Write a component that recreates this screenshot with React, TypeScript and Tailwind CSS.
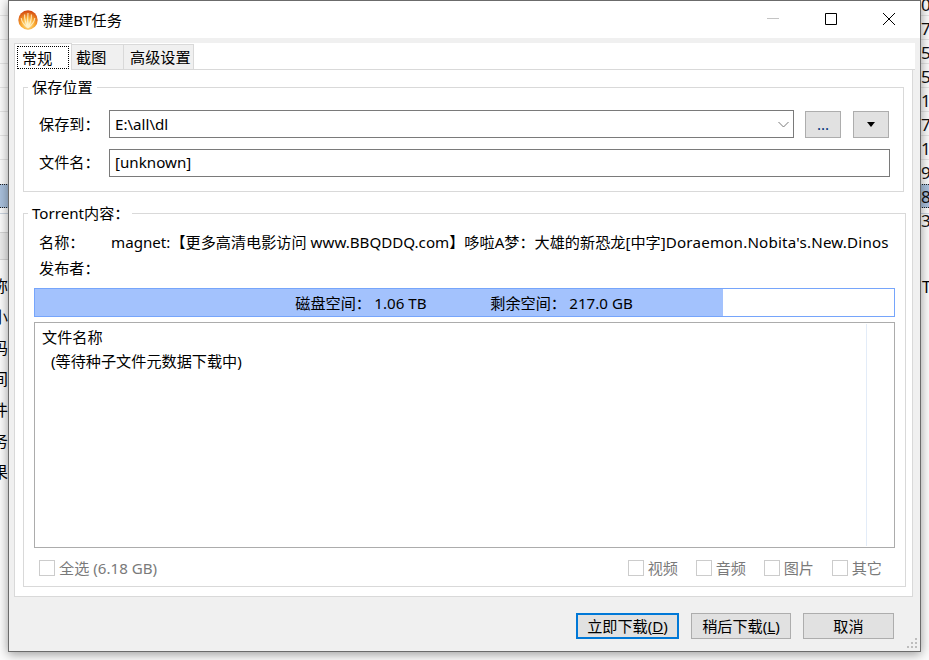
const FONT = "font-['Noto_Sans','Noto_Sans_CJK_SC',sans-serif]";

function Logo() {
  return (
    <svg width="20" height="20" viewBox="0 0 20 20">
      <defs>
        <radialGradient id="ball" cx="50%" cy="72%" r="70%">
          <stop offset="0%" stopColor="#fff2b8" />
          <stop offset="45%" stopColor="#fbb034" />
          <stop offset="100%" stopColor="#d2450e" />
        </radialGradient>
      </defs>
      <circle cx="10" cy="10" r="9.7" fill="url(#ball)" />
      <path d="M10 18 C9.4 12 9.6 7 10 3 M10 18 C7.6 13.5 6.4 9 6.6 4.5 M10 18 C12.4 13.5 13.6 9 13.4 4.5 M10 18 C6 15 3.6 11.5 3.2 8 M10 18 C14 15 16.4 11.5 16.8 8" stroke="#fff6d8" strokeWidth="1.1" fill="none" opacity="0.8" />
    </svg>
  );
}

function Check({ label, className }: { label: string; className?: string }) {
  return (
    <div className={`flex items-center ${className ?? ''}`}>
      <span className="block w-4 h-4 border border-[#cccccc] bg-white" />
      <span className="ml-[4px] text-[#7a7a7a] leading-4">{label}</span>
    </div>
  );
}

// what shows of the window behind the dialog
function BackgroundStrips() {
  const left = [
    ['称', 286],
    ['小', 317],
    ['码', 348],
    ['间', 379],
    ['件', 410],
    ['务', 441],
    ['果', 472],
  ] as const;
  const right = ['0', '7', '5', '5', '1', '7', '1', '9', '8', '3'];
  const lines = [15, 39, 63, 87, 111, 135, 159];
  return (
    <>
      {lines.map((y) => (
        <div key={y} className="absolute left-0 right-0 h-px bg-[#e4e4e4]" style={{ top: y }} />
      ))}
      <div className="absolute left-0 right-0 top-[184px] h-[24px] bg-[#a9c0dc] border-y border-dotted border-[#222222]" />
      <div className="absolute left-0 right-0 top-[213px] h-px bg-[#c9d3df]" />
      <div className="absolute left-0 w-2 top-[232px] h-[28px] bg-[#ececec] border-y border-[#d4d4d4]" />
      {left.map(([t, y]) => (
        <span key={t} className="absolute text-[16px] leading-5 left-[-8px] text-black" style={{ top: y - 10 }}>
          {t}
        </span>
      ))}
      {right.map((t, i) => (
        <span key={i} className="absolute text-[17px] leading-5 left-[921px] text-[#111111]" style={{ top: 5 + i * 24 - 10 }}>
          {t}
        </span>
      ))}
      <span className="absolute text-[16px] leading-5 left-[922px] top-[277px] text-black">T</span>
    </>
  );
}

export default function App() {
  return (
    <div className={`relative w-[929px] h-[660px] overflow-hidden bg-[#fbfbfb] text-[15.15px] text-black ${FONT}`}>
      <BackgroundStrips />

      <div className="absolute left-[8px] top-0 w-[913px] h-[652px] flex flex-col bg-[#f0f0f0] border border-[#6b6b6b] shadow-[0_2px_10px_rgba(0,0,0,0.4)]">
        <div className="h-[37px] shrink-0 bg-white flex items-center pl-[9px]">
          <Logo />
          <span className="ml-[5px] leading-5">新建BT任务</span>
          <div className="ml-auto flex items-center pb-[1px]">
            <svg width="14" height="14" viewBox="0 0 14 14" className="mr-[44px]">
              <path d="M1 6.5H13" stroke="#c4c4c4" />
            </svg>
            <svg width="14" height="14" viewBox="0 0 14 14" className="mr-[44px]">
              <path d="M1.5 1.5H12.5V12.5H1.5Z" stroke="#000" fill="none" />
            </svg>
            <svg width="14" height="14" viewBox="0 0 14 14" className="mr-[24px]">
              <path d="M1 1L13 13M13 1L1 13" stroke="#000" />
            </svg>
          </div>
        </div>

        <div className="h-[5px] shrink-0" />

        <div className="ml-[5px] mr-[5px] w-[901px] h-[27px] shrink-0 bg-white flex items-end border-b border-[#d9d9d9] relative">
          <div className="h-[27px] w-[58px] bg-white border border-b-0 border-[#d9d9d9] p-[2px] relative z-10 mb-[-1px]">
            <div className="h-[23px] border border-dotted border-black flex items-center pl-[4px] leading-4">常规</div>
          </div>
          <div className="h-[25px] w-[52px] bg-[#f0f0f0] border border-b-0 border-l-0 border-[#d9d9d9] flex items-center pl-[4px] leading-4">截图</div>
          <div className="h-[25px] w-[70px] bg-[#f0f0f0] border border-b-0 border-l-0 border-[#d9d9d9] flex items-center pl-[6px] leading-4">高级设置</div>
        </div>

        <div className="ml-[5px] w-[899px] h-[527px] shrink-0 bg-white border border-t-0 border-[#d9d9d9] px-[8px] pt-[17px] flex flex-col">
          <fieldset className="h-[105px] shrink-0 border border-[#d9d9d9] relative">
            <span className="absolute left-[4px] top-[-9px] bg-white px-[4px] leading-4">保存位置</span>
            <div className="flex items-center pl-[15px] pt-[22px]">
              <span className="w-[70px] leading-5">保存到：</span>
              <div className="w-[685px] h-[28px] border border-[#7a7a7a] flex items-center pl-[5px] pr-[4px] justify-between leading-5">
                <span>E:\all\dl</span>
                <svg width="11" height="7" viewBox="0 0 11 7">
                  <path d="M0.5 1L5.5 6L10.5 1" stroke="#7a7a7a" fill="none" />
                </svg>
              </div>
              <div className="ml-[11px] w-[36px] h-[27px] bg-[#e1e1e1] border border-[#adadad] flex items-center justify-center text-[#00337a] leading-4">...</div>
              <div className="ml-[12px] w-[36px] h-[27px] bg-[#e1e1e1] border border-[#adadad] flex items-center justify-center">
                <svg width="8" height="5" viewBox="0 0 8 5">
                  <path d="M0 0H8L4 5Z" fill="#000" />
                </svg>
              </div>
            </div>
            <div className="flex items-center pl-[15px] pt-[11px]">
              <span className="w-[70px] leading-5 -mt-[2px]">文件名：</span>
              <div className="w-[781px] h-[28px] border border-[#7a7a7a] flex items-center pl-[5px] pb-[2px] leading-5">[unknown]</div>
            </div>
          </fieldset>

          <fieldset className="mt-[21px] h-[374px] shrink-0 border border-[#d9d9d9] relative px-[10px]">
            <span className="absolute left-[4px] top-[-9px] bg-white px-[4px] pr-[2px] leading-4">Torrent内容：</span>
            <div className="flex pl-[5px] pt-[18px] h-[44px] leading-5 whitespace-nowrap overflow-hidden w-[856px]">
              <span className="w-[72px] shrink-0">名称：</span>
              <span>
                magnet:【更多高清电影访问 www.BBQDDQ.com】哆啦A梦：大雄的新恐龙[中字]
                <span className="tracking-[0.2px]">Doraemon.Nobita's.New.Dinos</span>
              </span>
            </div>
            <div className="pl-[5px] h-[30px] leading-5">发布者：</div>

            <div className="relative w-[861px] h-[29px] shrink-0 border border-[#76a5fb] flex items-center justify-center">
              <div className="absolute left-0 top-0 bottom-0 w-[688px] bg-[#a3c2fd]" />
              <div className="relative flex leading-5 ml-[-1px]">
                <span className="w-[79px]">磁盘空间：</span>
                <span className="w-[116px]">1.06 TB</span>
                <span className="w-[79px]">剩余空间：</span>
                <span>217.0 GB</span>
              </div>
            </div>

            <div className="mt-[5px] w-[861px] h-[226px] border border-[#acacac] flex">
              <div className="flex-1 pl-[7px] pt-[4px] leading-5">
                <div>文件名称</div>
                <div className="pl-[9px] pt-[4px]">(等待种子文件元数据下载中)</div>
              </div>
              <div className="w-px my-[1px] bg-[#e3ecf8] mr-[27px]" />
            </div>

            <div className="flex items-center h-[40px] pl-[5px] pr-[13px] leading-4">
              <Check label="全选 (6.18 GB)" />
              <div className="ml-auto flex">
                <Check label="视频" className="w-[68px]" />
                <Check label="音频" className="w-[68px]" />
                <Check label="图片" className="w-[68px]" />
                <Check label="其它" />
              </div>
            </div>
          </fieldset>
        </div>

        <div className="relative flex-1 flex items-start pt-[16px] pl-[567px]">
          <div className="w-[103px] h-[26px] bg-[#e1e1e1] border-2 border-[#0078d7] flex items-center justify-center leading-4">
            <span>立即下载(<span className="underline">D</span>)</span>
          </div>
          <div className="ml-[12px] w-[100px] h-[26px] bg-[#e1e1e1] border border-[#adadad] flex items-center justify-center leading-4">
            <span>稍后下载(<span className="underline">L</span>)</span>
          </div>
          <div className="ml-[12px] w-[91px] h-[26px] bg-[#e1e1e1] border border-[#adadad] flex items-center justify-center leading-4">取消</div>
          <svg width="12" height="12" viewBox="0 0 12 12" className="absolute right-[2px] bottom-[2px]">
            <path d="M9 1h2v2H9zM5 5h2v2H5zM9 5h2v2H9zM1 9h2v2H1zM5 9h2v2H5zM9 9h2v2H9z" fill="#bdbdbd" />
          </svg>
        </div>
      </div>
    </div>
  );
}
